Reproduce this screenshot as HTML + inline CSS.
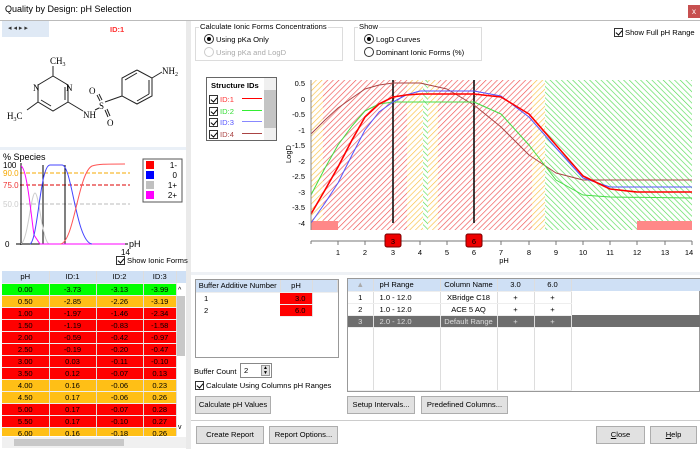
<!DOCTYPE html>
<html><head><meta charset="utf-8"><style>
*{margin:0;padding:0;box-sizing:border-box}
body{width:700px;height:449px;background:#fff;font-family:"Liberation Sans",sans-serif;font-size:7.6px;color:#000;position:relative;overflow:hidden;white-space:nowrap}
.a{position:absolute}
.btn{position:absolute;background:#e1e1e1;border:1px solid #adadad;text-align:center;font-size:7.6px;line-height:16px;white-space:nowrap}
.grp{position:absolute;border:1px solid #dcdcdc}
.cb{display:inline-block;width:9px;height:9px;border:1px solid #333;vertical-align:-2px;margin-right:2px;position:relative;background:#fff}
.cb:after{content:"";position:absolute;left:2px;top:0px;width:3px;height:5px;border:solid #000;border-width:0 1px 1px 0;transform:rotate(40deg)}
.rd{display:inline-block;width:10px;height:10px;border:1px solid #333;border-radius:50%;vertical-align:-2px;margin-right:2px;position:relative;background:#fff}
.rd.on:after{content:"";position:absolute;left:2px;top:2px;width:4px;height:4px;border-radius:50%;background:#000}
table{border-collapse:collapse;table-layout:fixed}
.dt td{height:12px;text-align:center;font-size:7.6px;border-right:1px solid #ddd;border-bottom:1px solid #eee;padding:0;white-space:nowrap;overflow:hidden}
</style></head><body>
<div class="a" style="left:5px;top:4px;font-size:9px">Quality by Design: pH Selection</div>
<div class="a" style="left:688px;top:5px;width:12px;height:13px;background:#c75050;color:#fff;font-size:8px;text-align:center;line-height:13px">x</div>
<div class="a" style="left:0;top:20px;width:700px;height:1px;background:#bbb"></div>
<div class="a" style="left:186px;top:21px;width:5px;height:428px;background:#eaeaea"></div>
<div class="a" style="left:0;top:147px;width:186px;height:3px;background:#eaf0f7"></div>
<div class="a" style="left:2px;top:21px;width:47px;height:16px;background:#dfe9f5;font-size:7px;line-height:16px;padding-left:6px;color:#333">◂ ◂ ▸ ▸</div>
<div class="a" style="left:110px;top:25px;color:#f33;font-size:7.5px;font-weight:bold">ID:1</div>
<svg class="a" style="left:0;top:0" width="700" height="449">
<defs>
<pattern id="pr" width="4" height="4" patternUnits="userSpaceOnUse" patternTransform="rotate(45)"><rect width="4" height="4" fill="#fff"/><line x1="0" y1="0" x2="0" y2="4" stroke="#f05050" stroke-width="1.3"/></pattern>
<pattern id="po" width="4" height="4" patternUnits="userSpaceOnUse" patternTransform="rotate(45)"><rect width="4" height="4" fill="#fff"/><line x1="0" y1="0" x2="0" y2="4" stroke="#fbc040" stroke-width="1.3"/></pattern>
<pattern id="pg" width="4" height="4" patternUnits="userSpaceOnUse" patternTransform="rotate(-45)"><rect width="4" height="4" fill="#fff"/><line x1="0" y1="0" x2="0" y2="4" stroke="#55dd55" stroke-width="1.3"/></pattern>
</defs>
<g stroke="#222" stroke-width="1" fill="none">
<polyline points="53,76 68,85 68,102 53,111 38,102 38,85 53,76"/>
<line x1="41" y1="100" x2="51" y2="106"/><line x1="65" y1="87" x2="65" y2="100"/>
<line x1="53" y1="76" x2="53" y2="66"/><line x1="38" y1="102" x2="27" y2="110"/>
<line x1="68" y1="102" x2="83" y2="111"/><line x1="95" y1="110" x2="99" y2="108"/>
<line x1="105" y1="102" x2="122" y2="96"/><line x1="97" y1="95" x2="100" y2="101"/><line x1="99" y1="94" x2="102" y2="100"/>
<line x1="105" y1="110" x2="108" y2="117"/><line x1="107" y1="109" x2="110" y2="116"/>
<polyline points="137,70 152,78 152,96 137,104 122,96 122,78 137,70"/>
<line x1="125" y1="80" x2="137" y2="73"/><line x1="149" y1="94" x2="137" y2="101"/><line x1="149" y1="80" x2="149" y2="94"/>
<line x1="152" y1="78" x2="162" y2="72"/>
</g>
<g font-family="Liberation Serif" font-size="9">
<text x="50" y="64">CH<tspan font-size="6" dy="2">3</tspan></text>
<text x="33" y="91">N</text><text x="66" y="91">N</text>
<text x="7" y="119">H<tspan font-size="6" dy="2">3</tspan><tspan dy="-2">C</tspan></text>
<text x="83" y="118">NH</text><text x="99" y="109">S</text>
<text x="89" y="94">O</text><text x="107" y="126">O</text>
<text x="162" y="74">NH<tspan font-size="6" dy="2">2</tspan></text>
</g>
<text x="3" y="160" font-size="9">% Species</text>
<text x="3" y="168" font-size="8">100</text>
<text x="3" y="176" font-size="8" fill="#f5a800">90.0</text>
<text x="3" y="188" font-size="8" fill="#e33">75.0</text>
<text x="3" y="207" font-size="8" fill="#ccc">50.0</text>
<text x="5" y="247" font-size="8">0</text>
<line x1="20" y1="173" x2="130" y2="173" stroke="#f5a800" stroke-dasharray="4,2"/>
<line x1="20" y1="185" x2="130" y2="185" stroke="#d00" stroke-dasharray="4,2"/>
<line x1="20" y1="204" x2="130" y2="204" stroke="#bbb" stroke-dasharray="4,2"/>
<line x1="21" y1="163" x2="21" y2="245" stroke="#000"/>
<line x1="16" y1="244" x2="128" y2="244" stroke="#000"/>
<line x1="43" y1="165" x2="43" y2="244" stroke="#000"/>
<line x1="65" y1="165" x2="65" y2="244" stroke="#000"/>
<g fill="none" stroke-width="1">
<path d="M21,244 C28,240 31,193 35,193 C39,193 42,240 49,244" stroke="#ccc"/>
<path d="M21,166 C27,168 31,215 34,235 L40,244 L125,244" stroke="#f0f"/>
<path d="M30,244 C38,240 40,165 50,165 L62,165 C72,165 76,242 92,244" stroke="#44f"/>
<path d="M60,244 C74,244 78,173 92,166 C98,164 105,164 125,164" stroke="#f55"/>
</g>
<text x="121" y="255" font-size="8">14</text><text x="129" y="247" font-size="9">pH</text>
<rect x="143" y="159" width="39" height="43" fill="#fff" stroke="#555"/>
<rect x="146" y="161" width="8" height="8" fill="#f00"/><text x="177" y="168" font-size="8" text-anchor="end">1-</text>
<rect x="146" y="171" width="8" height="8" fill="#00f"/><text x="177" y="178" font-size="8" text-anchor="end">0</text>
<rect x="146" y="181" width="8" height="8" fill="#c0c0c0"/><text x="177" y="188" font-size="8" text-anchor="end">1+</text>
<rect x="146" y="191" width="8" height="8" fill="#f0f"/><text x="177" y="198" font-size="8" text-anchor="end">2+</text>
<rect x="311" y="80" width="12" height="150" fill="url(#po)"/>
<rect x="323" y="80" width="84" height="150" fill="url(#pr)"/>
<rect x="407" y="80" width="16" height="150" fill="url(#po)"/>
<rect x="423" y="80" width="5" height="150" fill="url(#pg)"/>
<rect x="428" y="80" width="10" height="150" fill="url(#po)"/>
<rect x="438" y="80" width="94" height="150" fill="url(#pr)"/>
<rect x="532" y="80" width="13" height="150" fill="url(#po)"/>
<rect x="545" y="80" width="147" height="150" fill="url(#pg)"/>
<rect x="311" y="221" width="27" height="9" fill="#f88"/>
<rect x="637" y="221" width="55" height="9" fill="#f88"/>
<line x1="393" y1="80" x2="393" y2="223" stroke="#000" stroke-width="1.5"/>
<line x1="474" y1="80" x2="474" y2="223" stroke="#000" stroke-width="1.5"/>
<g fill="none" stroke-linejoin="round">
<polyline stroke="#a44" stroke-width="1" points="311,134 325,120 338,108 352,98 365,89 379,85 393,83 420,83 447,89 474,105 501,127 529,155 556,173 583,180 692,180"/>
<polyline stroke="#4d4" stroke-width="1" points="311,195 325,168 338,145 352,126 365,111 379,104 393,102 474,102 501,114 529,145 556,180 583,195 610,197 692,198"/>
<polyline stroke="#55f" stroke-width="1" points="311,223 325,203 338,183 352,155 365,130 379,112 393,102 406,95 420,91 474,91 501,96 529,117 556,148 583,178 610,187 692,187"/>
<polyline stroke="#f00" stroke-width="1.6" points="311,214 325,190 338,167 352,140 365,117 379,104 393,97 406,95 420,94 474,94 501,97 529,114 556,145 583,176 610,189 637,192 692,192"/>
</g>
<line x1="311" y1="80" x2="311" y2="230" stroke="#888"/>
<g font-size="7.5" text-anchor="end">
<text x="305" y="86">0.5</text><text x="305" y="102">0</text><text x="305" y="117">-0.5</text><text x="305" y="133">-1</text><text x="305" y="148">-1.5</text><text x="305" y="164">-2</text><text x="305" y="179">-2.5</text><text x="305" y="195">-3</text><text x="305" y="210">-3.5</text><text x="305" y="226">-4</text>
</g>
<text x="0" y="0" font-size="7.5" transform="translate(291,163) rotate(-90)">LogD</text>
<line x1="311" y1="241" x2="692" y2="241" stroke="#777"/>
<g stroke="#777"><path d="M311,241v3M338,241v4M365,241v4M393,241v4M420,241v4M447,241v4M474,241v4M501,241v4M529,241v4M556,241v4M583,241v4M610,241v4M637,241v4M665,241v4M692,241v4"/></g>
<g font-size="7.5" text-anchor="middle">
<text x="338" y="255">1</text><text x="365" y="255">2</text><text x="393" y="255">3</text><text x="420" y="255">4</text><text x="447" y="255">5</text><text x="474" y="255">6</text><text x="501" y="255">7</text><text x="529" y="255">8</text><text x="556" y="255">9</text><text x="583" y="255">10</text><text x="610" y="255">11</text><text x="637" y="255">12</text><text x="665" y="255">13</text><text x="689" y="255">14</text>
<text x="504" y="263">pH</text>
</g>
<rect x="385" y="234" width="16" height="13" rx="2" fill="#e00" stroke="#700"/><text x="393" y="244" font-size="7.5" text-anchor="middle">3</text>
<rect x="466" y="234" width="16" height="13" rx="2" fill="#e00" stroke="#700"/><text x="474" y="244" font-size="7.5" text-anchor="middle">6</text>
</svg>
<div class="a" style="left:116px;top:256px"><span class="cb"></span>Show Ionic Forms</div>
<div class="grp" style="left:195px;top:27px;width:148px;height:34px"></div>
<div class="a" style="left:199px;top:22px;background:#fff;padding:0 1px">Calculate Ionic Forms Concentrations</div>
<div class="a" style="left:204px;top:34px"><span class="rd on"></span>Using pKa Only</div>
<div class="a" style="left:204px;top:47px;color:#aaa"><span class="rd" style="border-color:#ccc"></span>Using pKa and LogD</div>
<div class="grp" style="left:354px;top:27px;width:128px;height:34px"></div>
<div class="a" style="left:358px;top:22px;background:#fff;padding:0 1px">Show</div>
<div class="a" style="left:364px;top:34px"><span class="rd on"></span>LogD Curves</div>
<div class="a" style="left:364px;top:47px"><span class="rd"></span>Dominant Ionic Forms (%)</div>
<div class="a" style="left:614px;top:28px"><span class="cb"></span>Show Full pH Range</div>
<div class="a" style="left:206px;top:77px;width:71px;height:64px;border:1px solid #666;background:#fff">
<div style="position:absolute;left:4px;top:3px;font-weight:bold;font-size:7.6px">Structure IDs</div>
<div style="position:absolute;left:2px;top:16px;line-height:11.5px;font-size:7.6px">
<div><span class="cb"></span><span style="color:#f33">ID:1</span><span style="display:inline-block;width:20px;height:1.5px;background:#f00;vertical-align:3px;margin-left:8px"></span></div>
<div><span class="cb"></span><span style="color:#3d3">ID:2</span><span style="display:inline-block;width:20px;height:1px;background:#3e3;vertical-align:3px;margin-left:8px"></span></div>
<div><span class="cb"></span><span style="color:#55f">ID:3</span><span style="display:inline-block;width:20px;height:1.5px;background:#88f;vertical-align:3px;margin-left:8px"></span></div>
<div><span class="cb"></span><span style="color:#a44">ID:4</span><span style="display:inline-block;width:20px;height:1px;background:#a44;vertical-align:3px;margin-left:8px"></span></div>
</div>
<div style="position:absolute;right:0;top:0;width:12px;height:62px;background:#f0f0f0"><div style="margin-top:12px;height:38px;background:#c4c4c4"></div></div>
</div>
<div class="a" style="left:2px;top:271px;width:175px;height:165px;overflow:hidden">
<table class="dt" style="width:175px">
<tr style="background:#cfe0f5"><td style="width:47px">pH</td><td style="width:47px">ID:1</td><td style="width:47px">ID:2</td><td>ID:3</td></tr>
<tr style="background:#00ff00"><td>0.00</td><td>-3.73</td><td>-3.13</td><td>-3.99</td></tr>
<tr style="background:#ffbf16"><td>0.50</td><td>-2.85</td><td>-2.26</td><td>-3.19</td></tr>
<tr style="background:#f00"><td>1.00</td><td>-1.97</td><td>-1.46</td><td>-2.34</td></tr>
<tr style="background:#f00"><td>1.50</td><td>-1.19</td><td>-0.83</td><td>-1.58</td></tr>
<tr style="background:#f00"><td>2.00</td><td>-0.59</td><td>-0.42</td><td>-0.97</td></tr>
<tr style="background:#f00"><td>2.50</td><td>-0.19</td><td>-0.20</td><td>-0.47</td></tr>
<tr style="background:#f00"><td>3.00</td><td>0.03</td><td>-0.11</td><td>-0.10</td></tr>
<tr style="background:#f00"><td>3.50</td><td>0.12</td><td>-0.07</td><td>0.13</td></tr>
<tr style="background:#ffbf16"><td>4.00</td><td>0.16</td><td>-0.06</td><td>0.23</td></tr>
<tr style="background:#ffbf16"><td>4.50</td><td>0.17</td><td>-0.06</td><td>0.26</td></tr>
<tr style="background:#f00"><td>5.00</td><td>0.17</td><td>-0.07</td><td>0.28</td></tr>
<tr style="background:#f00"><td>5.50</td><td>0.17</td><td>-0.10</td><td>0.27</td></tr>
<tr style="background:#ffbf16"><td>6.00</td><td>0.16</td><td>-0.18</td><td>0.26</td></tr>
</table></div>
<div class="a" style="left:177px;top:271px;width:9px;height:12px;background:#cfe0f5"></div>
<div class="a" style="left:178px;top:287px;font-size:7px">^</div>
<div class="a" style="left:177px;top:296px;width:8px;height:60px;background:#c8c8c8"></div>
<div class="a" style="left:178px;top:424px;font-size:7px">v</div>
<div class="a" style="left:2px;top:437px;width:184px;height:11px;background:#f0f0f0"><div style="position:absolute;left:12px;top:2px;width:110px;height:7px;background:#c8c8c8"></div></div>
<div class="a" style="left:191px;top:272px;width:509px;height:3px;background:#eef1f5"></div>
<div class="a" style="left:195px;top:279px;width:144px;height:79px;border:1px solid #999;background:#fff">
<table class="dt" style="width:142px">
<tr style="background:#cfe0f5"><td style="width:84px">Buffer Additive Number</td><td style="width:32px">pH</td><td></td></tr>
<tr><td style="text-align:left;padding-left:8px;border:0">1</td><td style="background:#f00;text-align:right;padding-right:6px">3.0</td><td style="border:0"></td></tr>
<tr><td style="text-align:left;padding-left:8px;border:0">2</td><td style="background:#f00;text-align:right;padding-right:6px">6.0</td><td style="border:0"></td></tr>
</table></div>
<div class="a" style="left:194px;top:367px">Buffer Count</div>
<div class="a" style="left:240px;top:363px;width:32px;height:15px;border:1px solid #888;background:#fff;padding-left:3px;line-height:13px">2<div style="position:absolute;right:1px;top:1px;width:9px;height:11px;background:#e0e0e0;border:1px solid #999;font-size:5px;line-height:5px;text-align:center">▲<br>▼</div></div>
<div class="a" style="left:195px;top:381px"><span class="cb"></span>Calculate Using Columns pH Ranges</div>
<div class="btn" style="left:195px;top:396px;width:76px;height:18px">Calculate pH Values</div>
<div class="a" style="left:347px;top:278px;width:353px;height:114px;border:1px solid #999;background:#fff">
<table class="dt" style="width:352px">
<tr style="background:#cfe0f5"><td style="width:25px;color:#aaa">▲</td><td style="width:67px;text-align:left;padding-left:6px">pH Range</td><td style="width:57px">Column Name</td><td style="width:37px">3.0</td><td style="width:37px">6.0</td><td style="border:0"></td></tr>
<tr><td>1</td><td style="text-align:left;padding-left:6px">1.0 - 12.0</td><td>XBridge C18</td><td>+</td><td>+</td><td style="border:0"></td></tr>
<tr><td>2</td><td style="text-align:left;padding-left:6px">1.0 - 12.0</td><td>ACE 5 AQ</td><td>+</td><td>+</td><td style="border:0"></td></tr>
<tr style="background:#6e6e6e;color:#ddd"><td>3</td><td style="text-align:left;padding-left:6px">2.0 - 12.0</td><td>Default Range</td><td>+</td><td>+</td><td style="border:0"></td></tr>
<tr style="height:63px"><td></td><td></td><td></td><td></td><td></td><td style="border:0"></td></tr>
</table></div>
<div class="btn" style="left:347px;top:396px;width:68px;height:18px">Setup Intervals...</div>
<div class="btn" style="left:421px;top:396px;width:87px;height:18px">Predefined Columns...</div>
<div class="a" style="left:191px;top:420px;width:509px;height:1px;background:#ccc"></div>
<div class="btn" style="left:196px;top:426px;width:68px;height:18px">Create Report</div>
<div class="btn" style="left:269px;top:426px;width:69px;height:18px">Report Options...</div>
<div class="btn" style="left:596px;top:426px;width:49px;height:18px"><u>C</u>lose</div>
<div class="btn" style="left:650px;top:426px;width:47px;height:18px"><u>H</u>elp</div>
</body></html>
